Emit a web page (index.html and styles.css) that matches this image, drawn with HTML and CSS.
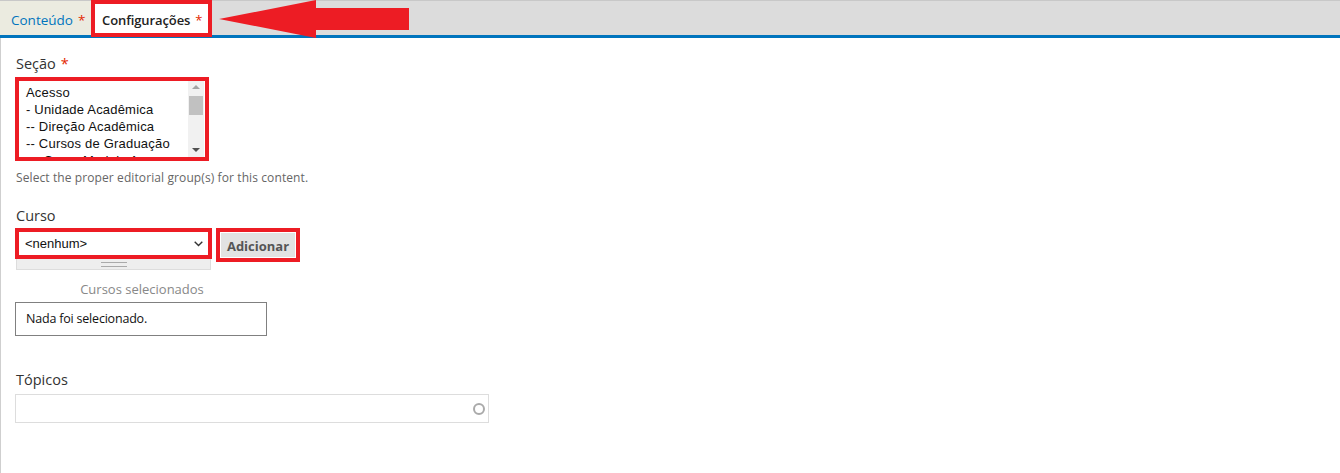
FILE: index.html
```html
<!DOCTYPE html>
<html lang="pt">
<head>
<meta charset="utf-8">
<link rel="stylesheet" href="styles.css">
</head>
<body>
<div class="tabs">
  <div class="tab tab-plain">Conteúdo<span class="req">*</span></div>
  <div class="tab tab-active">Configurações<span class="req">*</span></div>
  <svg class="arrow" width="192" height="40" viewBox="0 0 192 40">
    <polygon points="0,19 97,0 97,8 190,8 190,30 97,30 97,38" fill="#ed1c24"/>
  </svg>
</div>
<div class="content">
  <div class="field field-secao">
    <div class="label">Seção<span class="req">*</span></div>
    <div class="annot listbox-wrap">
      <div class="listbox">
        <div class="options">
          <div>Acesso</div>
          <div>- Unidade Acadêmica</div>
          <div>-- Direção Acadêmica</div>
          <div>-- Cursos de Graduação</div>
          <div>--- Curso Modelo A</div>
        </div>
        <div class="scroll">
          <span class="up"></span>
          <span class="thumb"></span>
          <span class="down"></span>
        </div>
      </div>
    </div>
    <div class="help">Select the proper editorial group(s) for this content.</div>
  </div>

  <div class="field field-curso">
    <div class="label">Curso</div>
    <div class="curso-row">
      <div class="curso-col">
        <div class="annot select-wrap">
          <div class="select">
            <span>&lt;nenhum&gt;</span>
            <svg width="9" height="6" viewBox="0 0 9 6"><path d="M0.7 0.7 L4.5 4.5 L8.3 0.7" fill="none" stroke="#333" stroke-width="1.4"/></svg>
          </div>
        </div>
        <div class="grip"><span></span></div>
      </div>
      <div class="annot button-wrap">
        <div class="button">Adicionar</div>
      </div>
    </div>
    <div class="selected-title">Cursos selecionados</div>
    <div class="selected-box">Nada foi selecionado.</div>
  </div>

  <div class="field field-topicos">
    <div class="label">Tópicos</div>
    <div class="autocomplete"><span class="throbber"></span></div>
  </div>
</div>
</body>
</html>
```

FILE: styles.css
```css
html, body {
  margin: 0;
  padding: 0;
  background: #fff;
}
body {
  font-family: "Open Sans", "Noto Sans", sans-serif;
  color: #333;
  width: 1340px;
  height: 473px;
  overflow: hidden;
}
.tabs {
  position: relative;
  display: flex;
  align-items: stretch;
  height: 34px;
  background: #dcdcdc;
  border-top: 1px solid #c8c8c8;
  border-bottom: 3px solid #0074bd;
}
.tab {
  font-size: 13.5px;
  display: flex;
  align-items: center;
}
.tab-plain {
  background: #ebebe0;
  color: #0074bd;
  padding: 3px 0 0 11px;
  box-sizing: border-box;
  width: 91px;
}
.tab-active {
  background: #fff;
  color: #222;
  font-weight: 600;
  font-size: 13px;
  border: 4px solid #ed1c24;
  margin-top: -1px;
  margin-bottom: -2px;
  padding: 3px 0 0 7px;
  height: 37px;
  width: 121px;
  box-sizing: border-box;
  letter-spacing: -0.1px;
}
.tab-active .req {
  font-weight: 400;
}
.req {
  color: #e32700;
  margin-left: 5px;
}
.arrow {
  position: absolute;
  left: 219px;
  top: -1px;
}
.content {
  border-left: 1px solid #cfcfcf;
  padding: 16px 14px 0 14px;
  height: 420px;
}
.label {
  font-size: 14.5px;
  color: #333;
  line-height: 20px;
  margin-left: 1px;
}
.annot {
  border: 4px solid #ed1c24;
  box-sizing: border-box;
}
.listbox-wrap {
  width: 194px;
  height: 84px;
  margin-top: 3px;
}
.listbox {
  display: flex;
  height: 76px;
  overflow: hidden;
  font-family: "Liberation Sans", Arial, sans-serif;
  font-size: 13px;
  letter-spacing: 0.2px;
  color: #111;
}
.options {
  flex: 1;
  padding: 3px 0 0 7px;
  line-height: 17px;
  overflow: hidden;
  white-space: nowrap;
}
.scroll {
  width: 16px;
  background: #f1f1f1;
  position: relative;
  margin-right: 1px;
}
.scroll .up, .scroll .down {
  position: absolute;
  left: 4px;
  width: 0;
  height: 0;
  border-left: 4px solid transparent;
  border-right: 4px solid transparent;
}
.scroll .up {
  top: 4px;
  border-bottom: 4px solid #a3a3a3;
}
.scroll .down {
  bottom: 5px;
  border-top: 4px solid #505050;
}
.scroll .thumb {
  position: absolute;
  left: 1px;
  right: 1px;
  top: 15px;
  height: 19px;
  background: #c1c1c1;
}
.help {
  font-size: 12px;
  color: #666;
  margin-top: 8px;
  margin-left: 1px;
  line-height: 17px;
  letter-spacing: 0.1px;
}
.field-curso {
  margin-top: 20px;
}
.curso-row {
  display: flex;
  align-items: flex-start;
  gap: 4px;
  margin-top: 2px;
}
.curso-col {
  display: flex;
  flex-direction: column;
}
.select-wrap {
  width: 197px;
  height: 31px;
}
.select {
  display: flex;
  align-items: center;
  justify-content: space-between;
  height: 23px;
  padding: 0 5px 0 6px;
  font-family: "Liberation Sans", Arial, sans-serif;
  font-size: 13px;
  color: #111;
  background: #fff;
}
.grip {
  width: 195px;
  height: 11px;
  margin-left: 1px;
  background: #eee;
  border: 1px solid #ddd;
  border-top: none;
  box-sizing: border-box;
  display: flex;
  justify-content: center;
  align-items: center;
}
.grip span {
  width: 26px;
  height: 3px;
  border-top: 1px solid #aaa;
  border-bottom: 1px solid #aaa;
}
.button-wrap {
  width: 84px;
  height: 34px;
  padding: 1px;
}
.button {
  height: 100%;
  background: #e2e2e2;
  color: #555;
  font-weight: 700;
  font-size: 13px;
  display: flex;
  align-items: center;
  justify-content: center;
  box-sizing: border-box;
  padding-top: 2px;
}
.selected-title {
  width: 252px;
  text-align: center;
  font-size: 13px;
  color: #888;
  margin-top: 10px;
  margin-left: 1px;
  line-height: 18px;
}
.selected-box {
  width: 252px;
  height: 34px;
  border: 1px solid #808080;
  box-sizing: border-box;
  margin-top: 4px;
  font-size: 12.5px;
  color: #111;
  padding: 8px 10px;
  line-height: 16px;
  letter-spacing: -0.2px;
}
.field-topicos {
  margin-top: 34px;
}
.autocomplete {
  width: 474px;
  height: 29px;
  border: 1px solid #ddd;
  box-sizing: border-box;
  margin-top: 4px;
  position: relative;
}
.throbber {
  position: absolute;
  right: 3px;
  top: 8px;
  width: 8px;
  height: 8px;
  border: 2px solid #aaa;
  border-radius: 50%;
}
```
